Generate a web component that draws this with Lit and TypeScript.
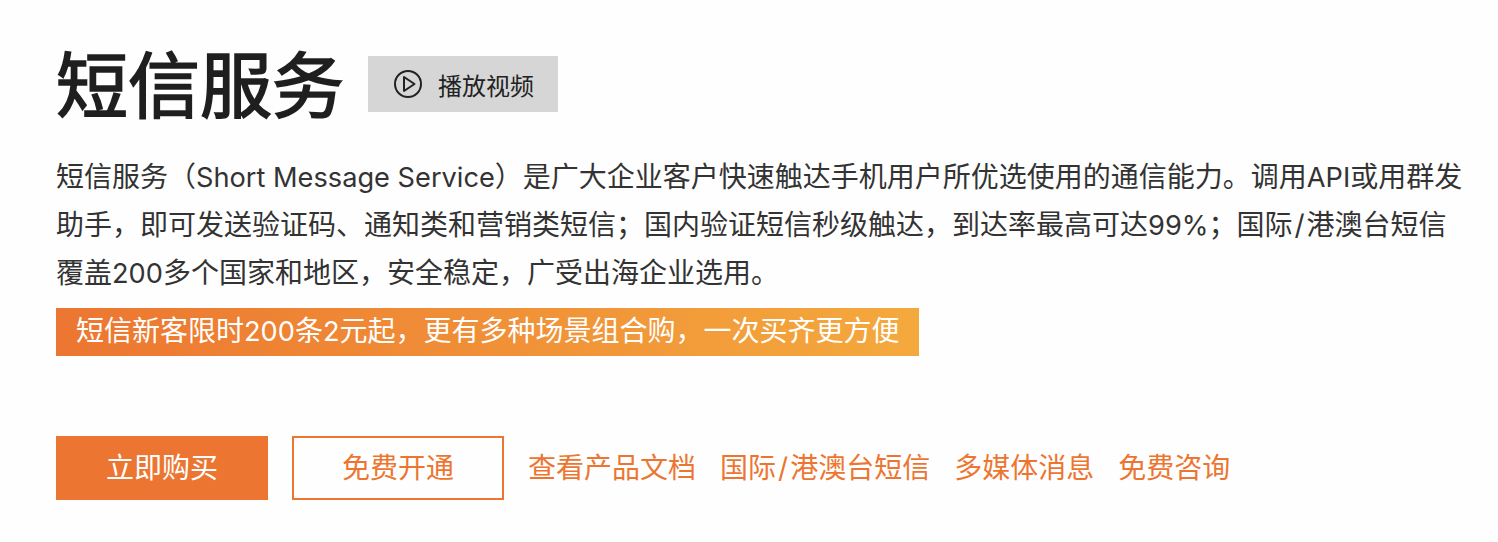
import { LitElement, html, css } from "lit";
import { customElement } from "lit/decorators.js";

@customElement("app-root")
export class AppRoot extends LitElement {
  static styles = css`
    :host { display: block; width: 1498px; height: 542px; background: #fefefe; overflow: hidden;
      font-family: "Inter", "Noto Sans CJK SC", sans-serif; color: #333; }
    .wrap { display: flex; flex-direction: column; align-items: flex-start; padding: 40px 0 0 56px; }
    .head { display: flex; align-items: center; gap: 24px; height: 88px; }
    h1 { margin: 0 0 6px; font-size: 72px; font-weight: 400; line-height: 82px; color: #1f1f1f;
      -webkit-text-stroke: 1.7px #1f1f1f; font-family: "Noto Sans CJK SC", sans-serif; }
    .play { display: flex; align-items: center; justify-content: center; gap: 15px; width: 190px; height: 56px; background: #d6d6d6; font-size: 24px; color: #222; }
    .play svg { flex: none; margin-left: 1px; }
    .desc { margin-top: 25px; font-size: 28px; color: #333; white-space: nowrap; }
    .desc > div { height: 48px; line-height: 48px; }
    .lat { font-size: 27.2px; line-height: 0; }
    .sl { margin: 0 2px; }
    .promo { margin-top: 11px; width: 863px; box-sizing: border-box; height: 48px; line-height: 47px; padding-left: 20px; color: #fff; font-size: 28px;
      background: linear-gradient(90deg, #ec7631, #f4a93d); white-space: nowrap; }
    .actions { display: flex; align-items: center; margin-top: 80px; font-size: 28px; line-height: 38px; color: #ec7631; }
    .btn { width: 212px; height: 64px; box-sizing: border-box; display: flex; align-items: center; justify-content: center; padding-bottom: 1px; }
    .solid { background: #ec7631; color: #fff; }
    .line { border: 2px solid #ec7631; margin-left: 24px; }
    .links { display: flex; gap: 24px; margin-left: 24px; padding-bottom: 1px; }
  `;
  render() {
    return html`<div class="wrap">
      <div class="head"><h1>短信服务</h1>
        <div class="play"><svg width="30" height="30" viewBox="0 0 30 30" fill="none" stroke="#222" stroke-width="2" stroke-linejoin="round"><circle cx="15" cy="15" r="13"/><path d="M11 8 21.5 15 11 22z"/></svg><span>播放视频</span></div></div>
      <div class="desc">
        <div>短信服务（<span class="lat">Short Message Service</span>）是广大企业客户快速触达手机用户所优选使用的通信能力。调用<span class="lat">API</span>或用群发</div>
        <div>助手，即可发送验证码、通知类和营销类短信；国内验证短信秒级触达，到达率最高可达<span class="lat">99%</span>；国际<span class="sl">/</span>港澳台短信</div>
        <div>覆盖<span class="lat">200</span>多个国家和地区，安全稳定，广受出海企业选用。</div>
      </div>
      <div class="promo">短信新客限时<span class="lat">200</span>条<span class="lat">2</span>元起，更有多种场景组合购，一次买齐更方便</div>
      <div class="actions"><div class="btn solid">立即购买</div><div class="btn line">免费开通</div>
        <div class="links"><span>查看产品文档</span><span>国际<span class="sl">/</span>港澳台短信</span><span>多媒体消息</span><span>免费咨询</span></div></div>
    </div>`;
  }
}
